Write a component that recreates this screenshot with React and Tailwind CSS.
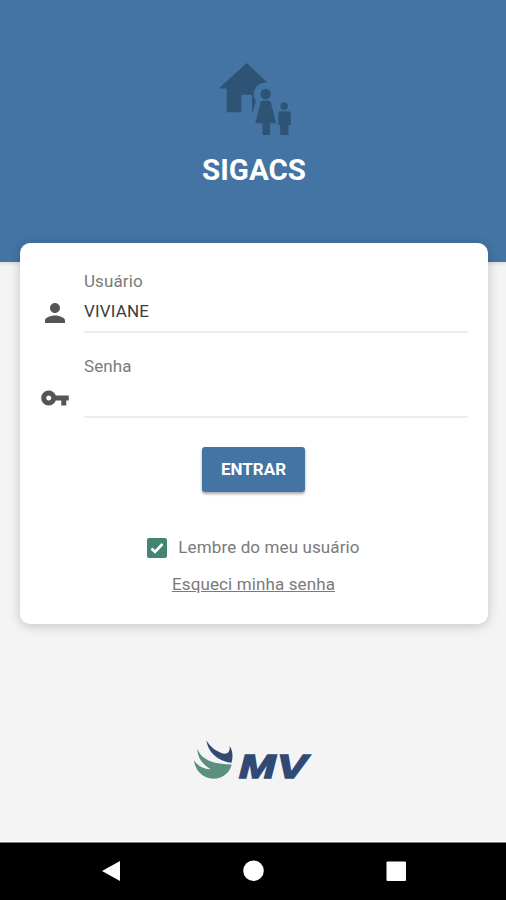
const LABEL = 'block h-5 text-[17px] leading-5 tracking-[0.1px] text-[#7a7a7a]'

function FamilyHouseIcon() {
  return (
    <svg width="76" height="76" viewBox="216 61 76 76" fill="#2d5475">
      <defs>
        <mask id="halo">
          <rect x="216" y="61" width="76" height="76" fill="#fff" />
          <circle cx="265.7" cy="94.5" r="12" fill="#000" />
          <path d="M257 98l-4.500 15h18V98z" fill="#000" />
        </mask>
      </defs>
      <path
        mask="url(#halo)"
        d="M246.700 63 218.700 88.500H226.700V112.200H241.300V94.700H252V112.200H257V88.500H273.500z"
      />
      <circle cx="265.7" cy="94" r="5.2" />
      <path d="M263.500 100.500h4.600q2.200 0 2.800 2l5.200 20.800h-6.200V135h-7.400v-11.700h-7.300l5.400-20.800q.7-2 2.900-2z" />
      <circle cx="284.2" cy="106.2" r="3.7" />
      <path d="M280.500 111.200h8q2.300 0 2.300 2.300V125h-2.400v10h-8.200v-10h-2V113.500q0-2.300 2.300-2.300z" />
    </svg>
  )
}

function PersonIcon() {
  return (
    <svg width="30" height="30" viewBox="0 0 24 24" fill="#555">
      <path d="M12 12c2.210 0 4-1.790 4-4s-1.790-4-4-4-4 1.790-4 4 1.790 4 4 4zm0 2c-2.670 0-8 1.340-8 4v2h16v-2c0-2.660-5.330-4-8-4z" />
    </svg>
  )
}

function KeyIcon() {
  return (
    <svg width="30" height="30" viewBox="0 0 24 24" fill="#555">
      <path d="M12.650 10C11.830 7.670 9.610 6 7 6c-3.310 0-6 2.690-6 6s2.690 6 6 6c2.610 0 4.830-1.670 5.650-4H17v4h4v-4h2v-4H12.650zM7 14c-1.100 0-2-.9-2-2s.9-2 2-2 2 .9 2 2-.9 2-2 2z" />
    </svg>
  )
}

function Field({ label, value, icon }) {
  return (
    <div className="flex h-[62px]">
      <div className="flex w-[64px] items-end pb-[5px] pl-[20px]">{icon}</div>
      <div className="flex-1 border-b-2 border-[#ececec]">
        <label className={LABEL}>{label}</label>
        <div className="mt-[10px] h-5 text-[17px] leading-5 tracking-[0.15px] text-[#3c3c3c]">{value}</div>
      </div>
    </div>
  )
}

function MvLogo() {
  return (
    <svg width="120" height="42" viewBox="193 739 120 42" className="overflow-visible">
      <path
        d="M206.500 740.500C210 747 217 752 224 753.700Q230.500 754 229.700 746C233.500 752 232.700 758.500 231.500 762.700C219 761.500 208 753 206.500 740.500z"
        fill="#304a75"
      />
      <path
        d="M197.500 748.500C200 758 211 764.500 231.700 764.500C230 773 222 778.800 213.500 778.800C202.500 778.500 195 770 194 760.500C198 766 204 769.500 211 769.200C203 765 197 758 197.500 748.500z"
        fill="#5b8f80"
      />
      <g
        fill="#304a75"
        stroke="#304a75"
        strokeWidth="1.6"
        className="text-[33px] font-bold italic font-['Liberation_Sans',sans-serif]"
      >
        <text x="239" y="778" textLength="36.5" lengthAdjust="spacingAndGlyphs">
          M
        </text>
        <text x="277" y="778" textLength="30" lengthAdjust="spacingAndGlyphs">
          V
        </text>
      </g>
    </svg>
  )
}

export default function App() {
  return (
    <div className="flex h-[900px] w-[506px] flex-col overflow-hidden bg-[#f4f4f4] font-['Roboto',sans-serif]">
      <header className="flex h-[262px] shrink-0 flex-col items-center bg-[#4474a4] pt-[61px] pl-[2px] shadow-[0_1px_4px_rgba(0,0,0,0.15)]">
        <FamilyHouseIcon />
        <h1 className="mt-[16px] text-[29.500px] leading-[34px] font-bold text-white">SIGACS</h1>
      </header>

      <main className="relative ml-[20px] -mt-[19px] flex h-[381px] w-[468px] shrink-0 flex-col rounded-[10px] bg-white pt-[28px] pr-[20px] shadow-[0_2px_12px_rgba(0,0,0,0.2)]">
        <Field label="Usuário" value="VIVIANE" icon={<PersonIcon />} />
        <div className="h-[23px]" />
        <Field label="Senha" value="" icon={<KeyIcon />} />

        <div className="flex flex-col items-center pl-[19px]">
          <button className="mt-[29px] h-[45px] w-[103px] rounded-[3px] bg-[#4474a4] text-[17px] font-bold text-white shadow-[0_2px_3px_rgba(0,0,0,0.35)]">
            ENTRAR
          </button>
          <label className="mt-[45px] flex h-5 items-center gap-[11px] text-[17px] leading-5 tracking-[0.12px] text-[#7a7a7a]">
            <span className="mt-px flex size-[20px] items-center justify-center rounded-[2px] bg-[#438473]">
              <svg width="16" height="16" viewBox="0 0 16 16" fill="none" stroke="#fff" strokeWidth="2.6">
                <path d="M2.500 8.500 6 12 13.500 4" />
              </svg>
            </span>
            Lembre do meu usuário
          </label>
          <a className="mt-[17px] text-[17px] leading-5 tracking-[0.12px] text-[#7a7a7a] underline">
            Esqueci minha senha
          </a>
        </div>
      </main>

      <div className="flex flex-1 justify-center pt-[115px]">
        <MvLogo />
      </div>

      <nav className="h-[58px] shrink-0 border-t border-[#777] bg-black shadow-[0_-1px_0_#fff]">
        <svg width="506" height="57" viewBox="0 843 506 57" fill="#fff">
          <path d="M120 861v20l-18-10z" />
          <circle cx="253.500" cy="870.800" r="10.300" />
          <rect x="386.500" y="861.500" width="19.500" height="19.500" rx="1" />
        </svg>
      </nav>
    </div>
  )
}
